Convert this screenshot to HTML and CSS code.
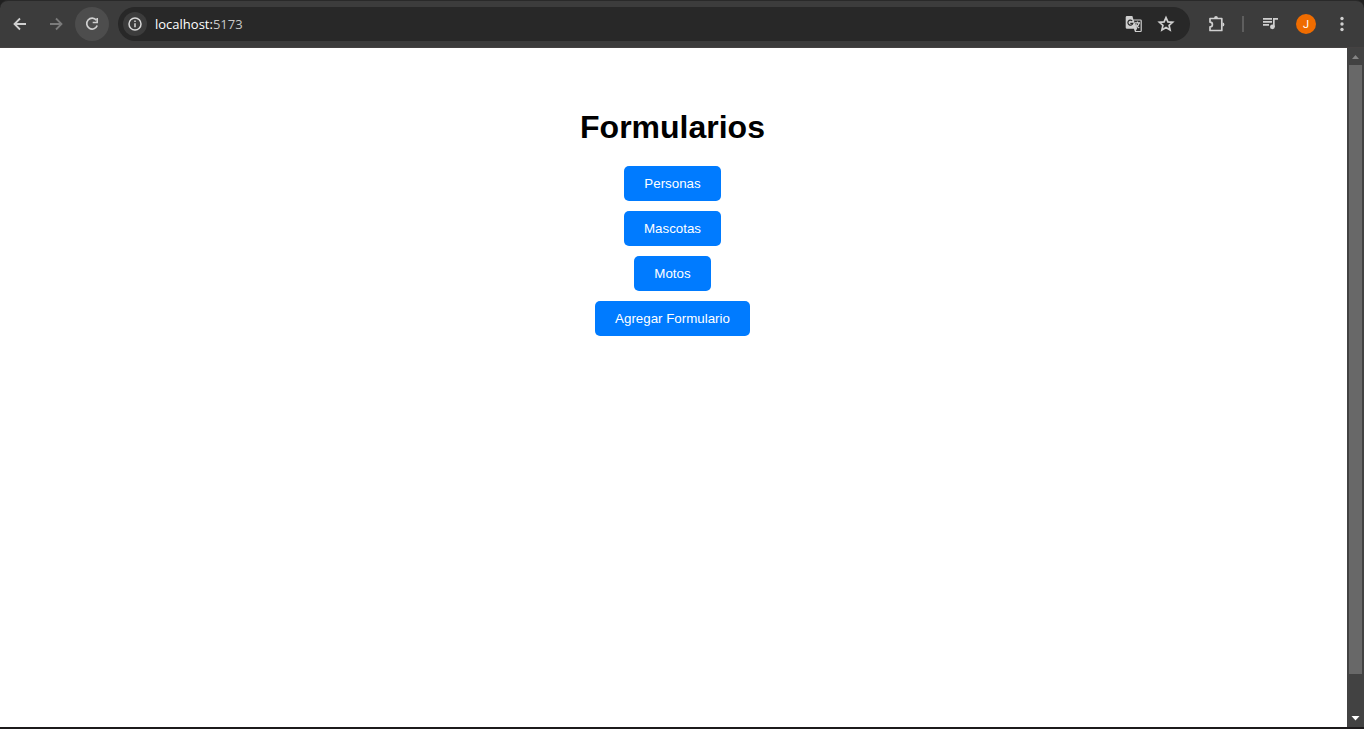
FILE: index.html
```html
<!DOCTYPE html>
<html lang="es">
<head>
<meta charset="utf-8">
<title>Formularios</title>
<link rel="stylesheet" href="styles.css">
</head>
<body>
<div class="browser">
  <header class="toolbar">
    <nav class="nav" aria-label="Navegación">
      <button class="icon-btn" aria-label="Atrás"><svg width="20" height="20" viewBox="0 0 20 20" fill="none" stroke="#d0d0d0" stroke-width="1.8"><path d="M16 10H5M10 4.500 4.500 10l5.500 5.500"/></svg></button>
      <button class="icon-btn" aria-label="Adelante"><svg width="20" height="20" viewBox="0 0 20 20" fill="none" stroke="#7b7b7b" stroke-width="1.8"><path d="M4 10h11M10 4.500l5.500 5.500-5.500 5.500"/></svg></button>
      <button class="icon-btn icon-btn-active" aria-label="Recargar"><svg width="20" height="20" viewBox="0 0 20 20"><path d="M14.400 6.300A5.400 5.400 0 1 0 15.200 11.500" fill="none" stroke="#d0d0d0" stroke-width="1.7"/><path d="M16 4v5.300h-5.300V7.700h3.700V4z" fill="#d0d0d0"/></svg></button>
    </nav>
    <div class="address">
      <button class="site-info" aria-label="Información del sitio"><svg width="16" height="16" viewBox="0 0 16 16" fill="none" stroke="#d8d8d8" stroke-width="1.5"><circle cx="8" cy="8" r="6"/><path d="M8 7.200v4M8 4.600v1.500"/></svg></button>
      <div class="url"><span class="host">localhost:</span><span class="port">5173</span></div>
      <button class="address-btn" aria-label="Traducir"><svg width="18" height="18" viewBox="0 0 18 18"><path d="M2 1h5.400l1 3.500h7.100a1.300 1.300 0 0 1 1.300 1.300v10a1.300 1.300 0 0 1-1.300 1.300H10l-1.100-3.400H2A1.300 1.300 0 0 1 .7 12.400V2.300A1.300 1.300 0 0 1 2 1z" fill="#cfcfcf"/><path d="M8.800 5.500h6.800v10.600h-4.900l1.500-2.500z" fill="#282828"/><path d="M7.200 5.900a2.500 2.500 0 1 0 .6 2.500H5.300" fill="none" stroke="#282828" stroke-width="1.200"/><path d="M10 7.800h5M12.500 6.500v1.300M14.200 8c-.5 2-1.800 3.300-3 4.200M10.800 9c.8 1.800 2 2.900 3.400 4" fill="none" stroke="#cfcfcf" stroke-width="1.200"/></svg></button>
      <button class="address-btn" aria-label="Añadir a marcadores"><svg width="18" height="18" viewBox="0 0 18 18" fill="none" stroke="#d0d0d0" stroke-width="1.700"><path d="M9 2.600l1.900 4.300 4.700.4-3.500 3.100 1 4.600L9 12.600 4.900 15l1-4.600-3.500-3.100 4.700-.4z"/></svg></button>
    </div>
    <div class="tools">
      <button class="tool-btn" aria-label="Extensiones"><svg width="20" height="20" viewBox="0 0 20 20"><path d="M4 4.500h11.800v12H4v-3.600c1.500 0 2.400-1 2.400-2.400S5.500 8.100 4 8.100z" fill="none" stroke="#d0d0d0" stroke-width="1.700" stroke-linejoin="round"/><path d="M8.100 4a1.900 1.900 0 0 1 3.800 0zM16.500 8.600a1.900 1.900 0 0 1 0 3.800z" fill="#d0d0d0"/></svg></button>
      <span class="divider"></span>
      <button class="tool-btn" aria-label="Control multimedia"><svg width="20" height="20" viewBox="0 0 20 20" fill="#cfcfcf"><path d="M3 4h9v1.700H3zM3 7h9v1.700H3zM3 10h6v1.700H3zM13 4h5v1.700h-3.300v7.500H13z"/><circle cx="12.400" cy="12.800" r="2.400"/></svg></button>
      <button class="avatar" aria-label="Perfil">J</button>
      <button class="tool-btn" aria-label="Menú"><svg width="20" height="20" viewBox="0 0 20 20" fill="#d0d0d0"><circle cx="10" cy="4.500" r="1.700"/><circle cx="10" cy="10" r="1.700"/><circle cx="10" cy="15.500" r="1.700"/></svg></button>
    </div>
  </header>
  <div class="viewport">
    <main class="page">
      <h1 class="title">Formularios</h1>
      <button class="form-btn">Personas</button>
      <button class="form-btn">Mascotas</button>
      <button class="form-btn">Motos</button>
      <button class="form-btn">Agregar Formulario</button>
    </main>
    <div class="scrollbar" aria-hidden="true">
      <svg width="17" height="17" viewBox="0 0 17 17"><path d="M5 11l3.500-4 3.500 4z" fill="#858585"/></svg>
      <div class="thumb"></div>
      <div class="track"></div>
      <svg width="17" height="17" viewBox="0 0 17 17"><path d="M4.500 6h8l-4 4.500z" fill="#fff"/></svg>
    </div>
  </div>
</div>
</body>
</html>
```
FILE: styles.css
```css
* { box-sizing: border-box; }

body {
  margin: 0;
  background: #202020;
  font-family: "Liberation Sans", Arial, sans-serif;
}

button {
  border: 0;
  padding: 0;
  background: none;
  cursor: pointer;
}

svg { display: block; }

.browser {
  display: flex;
  flex-direction: column;
  min-height: 100vh;
  border-bottom: 2px solid #1c1a1b;
}

.toolbar {
  display: flex;
  align-items: center;
  gap: 9px;
  height: 48px;
  padding: 0 12px 0 3px;
  border-top: 1px solid #292929;
  border-bottom: 1px solid #454242;
  border-radius: 8px 8px 0 0;
  background: #3c3c3c;
}

.nav { display: flex; gap: 2px; }

.icon-btn {
  display: grid;
  place-items: center;
  width: 34px;
  height: 34px;
  border-radius: 50%;
}

.icon-btn-active { background: #4d4d4d; }

.address {
  display: flex;
  flex: 1;
  align-items: center;
  gap: 8px;
  height: 34px;
  padding: 0 12px 0 5px;
  border-radius: 17px;
  background: #282828;
}

.site-info {
  display: grid;
  place-items: center;
  width: 24px;
  height: 24px;
  border-radius: 50%;
  background: #3c3c3c;
}

.url {
  flex: 1;
  font-family: "Open Sans", "Segoe UI", sans-serif;
  font-size: 13px;
  line-height: 20px;
}

.host { color: #fff; }
.port { color: #c7c7c7; }

.address-btn {
  display: grid;
  place-items: center;
  width: 24px;
  height: 24px;
}

.tools {
  display: flex;
  align-items: center;
  gap: 16px;
  padding-left: 7px;
}

.tool-btn { width: 20px; height: 20px; }

.divider {
  width: 2px;
  height: 16px;
  background: #5e5e5e;
}

.avatar {
  width: 20px;
  height: 20px;
  border-radius: 50%;
  background: #ef6c00;
  color: #fff;
  font-family: Roboto, sans-serif;
  font-size: 11px;
}

.viewport { display: flex; flex: 1; }

.page {
  display: flex;
  flex: 1;
  flex-direction: column;
  align-items: center;
  gap: 10px;
  padding: 60px 2px 20px 0;
  background: #fff;
}

.title {
  margin: 0 0 10px;
  font-size: 32px;
  line-height: 38px;
  color: #000;
}

.form-btn {
  padding: 10px 20px;
  border-radius: 5px;
  background: #007bff;
  color: #fff;
  font-family: inherit;
  line-height: 15px;
}

.scrollbar {
  display: flex;
  flex-direction: column;
  width: 17px;
  background: #424242;
}

.thumb {
  flex: 17;
  margin: 0 2px;
  background: #686868;
}

.track { flex: 1; }
```
